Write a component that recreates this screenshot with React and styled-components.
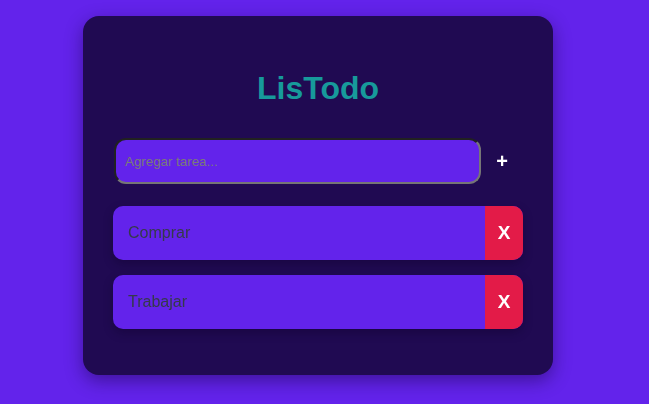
import React, { useState } from 'react';
import styled, { createGlobalStyle } from 'styled-components';

const GlobalStyle = createGlobalStyle`
    body {
        margin: 0;
        background-color: #6323eb;
        font-family: "Liberation Sans", Arial, sans-serif;
    }
`

const Page = styled.div`
    display: flex;
    justify-content: center;
    padding: 16px 13px 30px 0;
`

const Card = styled.div`
    width: 410px;
    padding: 54px 30px 46px;
    background-color: #200a52;
    border-radius: 16px;
    box-shadow: 0 6px 18px rgba(20, 0, 60, 0.45);
`

const Title = styled.h1`
    margin: 0 0 31px;
    text-align: center;
    font-size: 32px;
    font-weight: 700;
    color: #179a9b;
`

const Form = styled.form`
    display: flex;
    align-items: center;
    margin-bottom: 22px;
`

const Input = styled.input`
    flex: 1;
    height: 46px;
    box-sizing: border-box;
    margin-left: 1px;
    padding: 0 9px;
    background-color: #6323eb;
    border: 2px inset rgb(118, 118, 118);
    border-radius: 12px;
    font-family: "Liberation Sans", Arial, sans-serif;
    font-size: 13.333px;
    color: #222;
    caret-color: #000;
    outline: none;
    &::placeholder {
        color: #7a7a7a;
    }
`

const AddButton = styled.button`
    width: 42px;
    background: none;
    border: none;
    color: #fff;
    font-family: "Liberation Sans", Arial, sans-serif;
    font-size: 20px;
    font-weight: 700;
    cursor: pointer;
`

const List = styled.ul`
    display: flex;
    flex-direction: column;
    gap: 15px;
    margin: 0;
    padding: 0;
    list-style: none;
`

const Item = styled.li`
    display: flex;
    height: 54px;
    border-radius: 10px;
    overflow: hidden;
    background-color: #6323eb;
    box-shadow: 0 4px 10px rgba(15, 0, 45, 0.4);
`

const ItemText = styled.span`
    flex: 1;
    display: flex;
    align-items: center;
    padding-left: 15px;
    font-size: 16px;
    color: #353a4a;
`

const DeleteButton = styled.button`
    width: 38px;
    background-color: #e31b48;
    border: none;
    color: #fff;
    font-family: "Liberation Sans", Arial, sans-serif;
    font-size: 19px;
    font-weight: 700;
    cursor: pointer;
`

const App = () => {
    const [tasks, setTasks] = useState(['Comprar', 'Trabajar']);
    const [value, setValue] = useState('');

    const addTask = (e) => {
        e.preventDefault();
        if (!value.trim()) return;
        setTasks([...tasks, value.trim()]);
        setValue('');
    }

    return (
        <Page>
            <GlobalStyle />
            <Card>
                <Title>LisTodo</Title>
                <Form onSubmit={addTask}>
                    <Input
                        autoFocus
                        placeholder="Agregar tarea..."
                        value={value}
                        onChange={(e) => setValue(e.target.value)}
                    />
                    <AddButton type="submit">+</AddButton>
                </Form>
                <List>
                    {tasks.map((task, i) => (
                        <Item key={i}>
                            <ItemText>{task}</ItemText>
                            <DeleteButton onClick={() => setTasks(tasks.filter((_, j) => j !== i))}>X</DeleteButton>
                        </Item>
                    ))}
                </List>
            </Card>
        </Page>
    );
}

export default App;
